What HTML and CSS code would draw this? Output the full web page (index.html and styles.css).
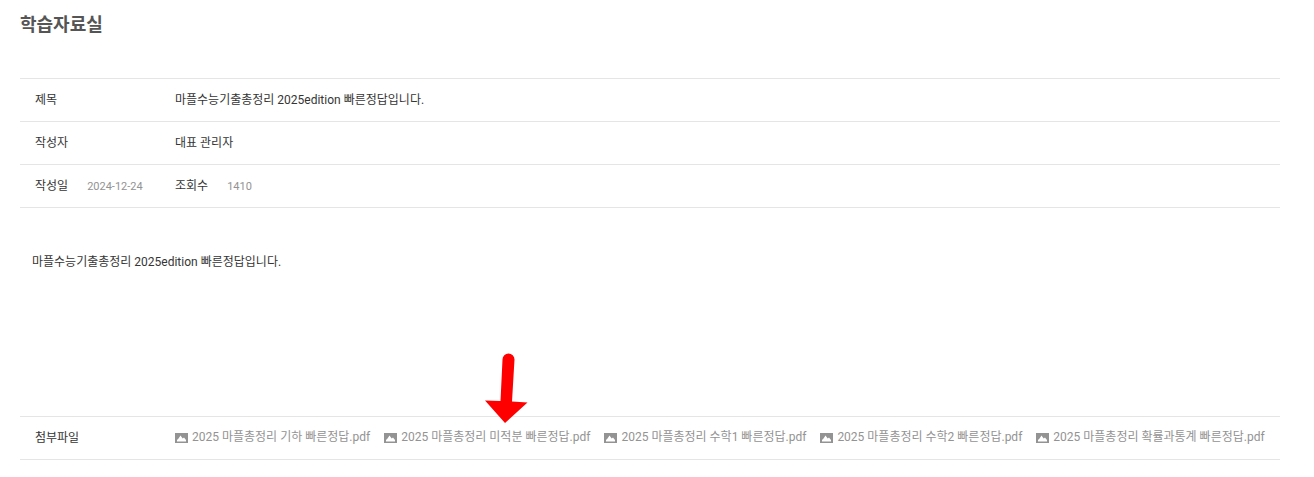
FILE: index.html
```html
<!DOCTYPE html>
<html lang="ko">
<head>
  <meta charset="UTF-8">
  <meta name="viewport" content="width=device-width, initial-scale=1.0">
  <title>학습자료실</title>
  <link rel="stylesheet" href="styles.css">
</head>
<body>
  <svg class="defs" width="0" height="0" aria-hidden="true">
    <symbol id="icon-file" viewBox="0 0 13 10">
      <path fill="currentColor" fill-rule="evenodd" d="M0 0h13v10H0zM2 8.500h9V7L9 4.500 7.700 5.500 5.500 2.500 3.500 5.500 2 7z"/>
    </symbol>
  </svg>

  <main class="board">
    <h1 class="board-title">학습자료실</h1>

    <table class="board-table">
      <tbody>
        <tr>
          <th scope="row">제목</th>
          <td>마플수능기출총정리 2025edition 빠른정답입니다.</td>
        </tr>
        <tr>
          <th scope="row">작성자</th>
          <td>대표 관리자</td>
        </tr>
        <tr>
          <th scope="row">작성일<span class="meta">2024-12-24</span></th>
          <td>조회수<span class="meta">1410</span></td>
        </tr>
      </tbody>
    </table>

    <article class="content">
      <p>마플수능기출총정리 2025edition 빠른정답입니다.</p>
    </article>

    <table class="board-table">
      <tbody>
        <tr>
          <th scope="row">첨부파일</th>
          <td>
            <ul class="files">
              <li><a href="#"><svg class="icon"><use href="#icon-file"/></svg>2025 마플총정리 기하 빠른정답.pdf</a></li>
              <li class="marked">
                <a href="#"><svg class="icon"><use href="#icon-file"/></svg>2025 마플총정리 미적분 빠른정답.pdf</a>
                <svg class="arrow" viewBox="0 0 44 70" aria-hidden="true">
                  <path fill="#f00" d="M18.500 6.500a6 6 0 0 1 12 0L28 48.500 43.500 49.500 21 70 1 47.500 16.500 48z"/>
                </svg>
              </li>
              <li><a href="#"><svg class="icon"><use href="#icon-file"/></svg>2025 마플총정리 수학1 빠른정답.pdf</a></li>
              <li><a href="#"><svg class="icon"><use href="#icon-file"/></svg>2025 마플총정리 수학2 빠른정답.pdf</a></li>
              <li><a href="#"><svg class="icon"><use href="#icon-file"/></svg>2025 마플총정리 확률과통계 빠른정답.pdf</a></li>
            </ul>
          </td>
        </tr>
      </tbody>
    </table>
  </main>
</body>
</html>
```
FILE: styles.css
```css
:root {
  --clr-text: #353535;
  --clr-title: #555;
  --clr-muted: #939393;
  --clr-line: #e5e5e5;
}

* {
  padding: 0;
  margin: 0;
  box-sizing: border-box;
}

body {
  background-color: #fff;
  color: var(--clr-text);
  font-family: Roboto, "Noto Sans CJK KR", sans-serif;
  font-size: 12px;
  line-height: 18px;
}

.defs {
  position: absolute;
}

.board {
  padding: 13px 34px 16px 20px;
}

.board-title {
  color: var(--clr-title);
  font-size: 18px;
  font-weight: 700;
  line-height: 24px;
  margin-bottom: 41px;
}

.board-table {
  width: 100%;
  table-layout: fixed;
  border-collapse: collapse;
  border-top: 1px solid var(--clr-line);
}

.board-table th,
.board-table td {
  height: 43px;
  padding: 0 0 0 15px;
  border-bottom: 1px solid var(--clr-line);
  font-weight: 400;
  text-align: left;
  vertical-align: middle;
}

.board-table th {
  width: 140px;
}

.meta {
  color: var(--clr-muted);
  font-size: 11px;
  margin-left: 19px;
}

.content {
  min-height: 208px;
  padding: 45px 12px;
}

.files {
  display: flex;
  flex-wrap: wrap;
  column-gap: 14px;
  padding-bottom: 2px;
  list-style: none;
}

.files a {
  display: flex;
  align-items: center;
  gap: 4px;
  color: var(--clr-muted);
  text-decoration: none;
  white-space: nowrap;
}

.files a:hover {
  text-decoration: underline;
}

.icon {
  width: 13px;
  height: 10px;
  margin-top: 2px;
}

.marked {
  position: relative;
}

/* points down at the file it sits over */
.arrow {
  position: absolute;
  left: 100px;
  bottom: 23px;
  width: 44px;
  height: 70px;
  pointer-events: none;
}
```
